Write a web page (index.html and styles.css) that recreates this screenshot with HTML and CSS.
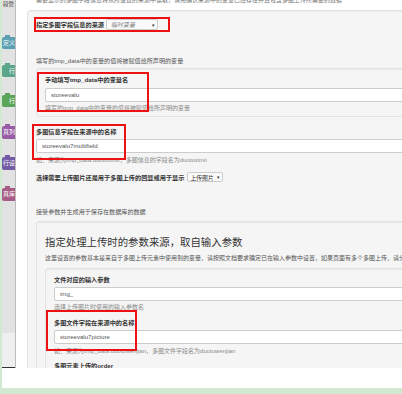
FILE: index.html
```html
<!DOCTYPE html>
<html lang="zh-CN">
<head>
<meta charset="UTF-8">
<meta name="viewport" content="width=device-width, initial-scale=1.0">
<title>多图字段设置</title>
<link rel="stylesheet" href="styles.css">
</head>
<body>

<div class="frame">
  <div class="page">
    <div class="shot">

      <div class="side">
        <div class="side-title">段管</div>
        <div class="blk blk-teal">定义</div>
        <div class="blk blk-sea">行</div>
        <div class="blk blk-green">行</div>
        <div class="blk blk-purple">真列</div>
        <div class="blk blk-indigo">行设</div>
        <div class="blk blk-pink">真库</div>
        <div class="side-foot"></div>
      </div>

      <div class="main">
        <div class="topline">需要显示的多图字段信息将从所设置的来源中读取，请先确认来源中的变量已经存在并且包含多图上传所需要的数据</div>

        <div class="well outer">
          <div class="row">
            <span class="lbl">指定多图字段信息的来源</span>
            <span class="sel sel-src"><i>临时变量</i><b>▾</b></span>
          </div>

          <div class="note note-1">填写的tmp_data中的变量的值将被赋值给所声明的变量</div>

          <div class="well well-1">
            <div class="lbl">手动填写tmp_data中的变量名</div>
            <div class="inp">storeevalu</div>
            <div class="help">填写的tmp_data中的变量的值将被赋值给所声明的变量</div>
          </div>

          <div class="lbl lbl-2">多图信息字段在来源中的名称</div>
          <div class="inp">storeevalu7multifield</div>
          <div class="help help-2">如：来源为tmp_data.duotuxinxi，多图信息的字段名为duotuxinxi</div>

          <div class="row row-3">
            <span class="lbl">选择需要上传图片还是用于多图上传的回显或用于显示</span>
            <span class="sel sel-mode">上传图片<b>▾</b></span>
          </div>

          <div class="note note-2">接受参数并生成用于保存在数据库的数据</div>

          <div class="well well-2">
            <div class="heading">指定处理上传时的参数来源，取自输入参数</div>
            <div class="desc">这里设置的参数基本是来自于多图上传元素中使用到的变量，请按照文档要求确定已在输入参数中设置，如果页面有多个多图上传，请分别设置</div>

            <div class="well well-3">
              <div class="lbl">文件对应的输入参数</div>
              <div class="inp">img_</div>
              <div class="help">选择上传图片时使用的输入参数名</div>

              <div class="lbl lbl-4">多图文件字段在来源中的名称</div>
              <div class="inp">storeevalu7picture</div>
              <div class="help help-2">如：来源为tmp_data.duotuwenjian，多图文件字段名为duotuwenjian</div>

              <div class="lbl lbl-5">多图元素上传的order</div>
            </div>
          </div>
        </div>
      </div>

      <!-- red marks drawn over the screenshot -->
      <div class="mark mark-1"></div>
      <div class="mark mark-2"></div>
      <div class="mark mark-3"></div>
      <div class="mark mark-4"></div>
    </div>
  </div>
</div>

</body>
</html>
```

FILE: styles.css
```css
body {
    margin: 0;
    background-color: #d1e9d1;
    font-family: "Liberation Sans", "Noto Sans CJK SC", sans-serif;
}
.frame {
    padding: 0 0 6px 2px;
}
.page {
    background-color: #fff;
    height: 388px;
}
.shot {
    position: relative;
    display: flex;
    height: 368px;
    overflow: hidden;
}

/* left block palette */
.side {
    display: flex;
    flex-direction: column;
    flex: none;
    width: 13px;
    overflow: hidden;
    background-color: #e2e2e2;
    border-right: 1px solid #bcbcbc;
}
.side-title {
    font-size: 5.5px;
    line-height: 9px;
    color: #333;
    white-space: nowrap;
    padding-left: 1px;
}
.blk {
    position: relative;
    flex: none;
    width: 13px;
    height: 12px;
    border-radius: 2px 0 0 2px;
    font-size: 6px;
    line-height: 12px;
    color: #fff;
    white-space: nowrap;
    text-align: right;
}
.blk:before {
    content: "";
    position: absolute;
    left: 3px;
    top: -2px;
    width: 5px;
    height: 2px;
    background: inherit;
}
.blk-teal   { background-color: #5b9fb3; margin-top: 28px; }
.blk-sea    { background-color: #5ba58a; margin-top: 16px; }
.blk-green  { background-color: #5ba55b; margin-top: 18px; }
.blk-purple { background-color: #995ba5; margin-top: 19px; height: 13px; line-height: 13px; }
.blk-indigo { background-color: #745ba5; margin-top: 18px; height: 13px; line-height: 13px; }
.blk-pink   { background-color: #a55b85; margin-top: 18px; height: 13px; line-height: 13px; }
.side-foot {
    margin-top: auto;
    height: 34px;
    background-color: #efefef;
    border-bottom: 1px solid #333;
}

/* page content */
.main {
    flex: 1;
    overflow: hidden;
    background-color: #fff;
    padding-left: 11px;
}
.topline {
    margin: -4px 0 0 9px;
    font-size: 6px;
    line-height: 9px;
    color: #777;
    white-space: nowrap;
}
.well {
    box-sizing: border-box;
    background-color: #f5f5f5;
    border: 1px solid #e3e3e3;
    border-radius: 3px;
    box-shadow: inset 0 1px 1px rgba(0, 0, 0, 0.05);
    padding-left: 8px;
}
.outer {
    width: 620px;
    margin-top: 5px;
    padding-top: 8px;
    height: 420px;
}
.row {
    display: flex;
    align-items: center;
    height: 11px;
}
.lbl {
    font-size: 6.2px;
    line-height: 9px;
    font-weight: bold;
    color: #333;
    white-space: nowrap;
}
.sel {
    box-sizing: border-box;
    display: flex;
    align-items: center;
    justify-content: space-between;
    flex: none;
    height: 11px;
    margin-left: 2px;
    padding: 0 2px 0 4px;
    border: 1px solid #ccc;
    border-radius: 2px;
    background-color: #fafafa;
    font-size: 6px;
    color: #333;
    white-space: nowrap;
}
.sel i {
    color: #777;
}
.sel b {
    font-size: 5px;
    font-weight: normal;
    color: #333;
}
.sel-src {
    width: 52px;
}
.sel-mode {
    width: 36px;
    height: 10px;
    padding-left: 3px;
    font-size: 5.8px;
}
.note {
    font-size: 6.1px;
    line-height: 9px;
    color: #555;
    white-space: nowrap;
}
.note-1 { margin-top: 26px; }
.note-2 { margin-top: 25px; }
.inp {
    box-sizing: border-box;
    height: 14px;
    margin-top: 3px;
    padding-left: 5px;
    border: 1px solid #ccc;
    border-radius: 2px;
    background-color: #fff;
    font-size: 6.1px;
    line-height: 12px;
    color: #555;
}
.help {
    margin-top: 2px;
    font-size: 6px;
    line-height: 9px;
    color: #8a8a8a;
    white-space: nowrap;
}
.help-2 { margin-top: 3px; }
.well-1 {
    margin-top: 3px;
    padding-top: 6px;
    padding-bottom: 3px;
}
.well-1 .inp { margin-top: 4px; }
.lbl-2 { margin-top: 10px; }
.row-3 {
    margin-top: 7px;
    height: 10px;
}
.well-2 {
    margin-top: 5px;
    padding-top: 14px;
    height: 200px;
}
.heading {
    font-size: 10.4px;
    line-height: 14px;
    color: #333;
    white-space: nowrap;
}
.desc {
    margin-top: 4px;
    font-size: 6px;
    line-height: 9px;
    color: #555;
    white-space: nowrap;
}
.well-3 {
    margin-top: 5px;
    padding-top: 6px;
    height: 150px;
}
.lbl-4 { margin-top: 6px; }
.lbl-5 { margin-top: 5px; }

/* annotation boxes */
.mark {
    position: absolute;
    box-sizing: border-box;
    border: 2px solid #ee1111;
}
.mark-1 { left: 32px; top: 17px; width: 136px; height: 15px; }
.mark-2 { left: 35px; top: 72px; width: 112px; height: 40px; }
.mark-3 { left: 30px; top: 124px; width: 94px; height: 36px; }
.mark-4 { left: 44px; top: 310px; width: 91px; height: 41px; }
```
